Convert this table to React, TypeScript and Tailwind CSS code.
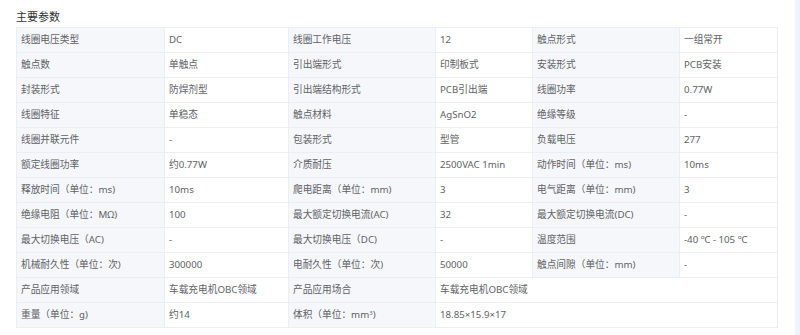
type Cell = { text: React.ReactNode; label?: boolean; span?: boolean };

const rows: [string, React.ReactNode, string, React.ReactNode, string?, React.ReactNode?][] = [
	["线圈电压类型", "DC", "线圈工作电压", "12", "触点形式", "一组常开"],
	["触点数", "单触点", "引出端形式", "印制板式", "安装形式", "PCB安装"],
	["封装形式", "防焊剂型", "引出端结构形式", "PCB引出端", "线圈功率", "0.77W"],
	["线圈特征", "单稳态", "触点材料", "AgSnO2", "绝缘等级", "-"],
	["线圈并联元件", "-", "包装形式", "型管", "负载电压", "277"],
	["额定线圈功率", "约0.77W", "介质耐压", "2500VAC 1min", "动作时间（单位：ms)", "10ms"],
	["释放时间（单位：ms)", "10ms", "爬电距离（单位：mm)", "3", "电气距离（单位：mm)", "3"],
	["绝缘电阻（单位：MΩ)", "100", "最大额定切换电流(AC)", "32", "最大额定切换电流(DC)", "-"],
	["最大切换电压（AC)", "-", "最大切换电压（DC)", "-", "温度范围", "-40 ℃ - 105 ℃"],
	["机械耐久性（单位：次)", "300000", "电耐久性（单位：次)", "50000", "触点间隙（单位：mm)", "-"],
	["产品应用领域", "车载充电机OBC领域", "产品应用场合", "车载充电机OBC领域"],
	["重量（单位：g)", "约14", "体积（单位：mm", "18.85×15.9×17"],
];

const ParamCell = ({ text, label, span }: Cell) => (
	<div
		className={`flex items-center h-[24px] pl-[4px] whitespace-nowrap overflow-hidden ${
			label ? "bg-[#f5f7fa]" : "bg-white"
		} ${span ? "col-span-3" : ""}`}
	>
		{text}
	</div>
);

export default function App() {
	return (
		<div
			className="relative w-[800px] h-[335px] bg-white text-[#606266] overflow-hidden"
			style={{ fontFamily: '"Noto Sans", "Noto Sans CJK SC", sans-serif' }}
		>
			<div className="pl-[16px]">
				<div className="h-[27px] pt-[10px] text-[11px] leading-[14px] font-normal text-[#303133]">
					主要参数
				</div>
				<div className="w-[762px] p-px bg-[#ebeef5]">
					<div className="grid grid-cols-[147px_123px_146px_96px_146px_97px] gap-px text-[9.7px]">
						{rows.map((r, i) => {
							const short = r.length === 4;
							return [
								<ParamCell key={`${i}-0`} text={r[0]} label />,
								<ParamCell key={`${i}-1`} text={r[1]} />,
								<ParamCell
									key={`${i}-2`}
									text={
										i === 11 ? (
											<span>
												{r[2]}
												<sup className="text-[6px]">3</sup>)
											</span>
										) : (
											r[2]
										)
									}
									label
								/>,
								<ParamCell key={`${i}-3`} text={r[3]} span={short} />,
								...(short
									? []
									: [
											<ParamCell key={`${i}-4`} text={r[4]} label />,
											<ParamCell key={`${i}-5`} text={r[5]} />,
										]),
							];
						})}
					</div>
				</div>
			</div>
			{/* scroll track edge */}
			<div className="absolute top-0 right-0 w-[5px] h-full bg-[#eef3fb]" />
		</div>
	);
}
